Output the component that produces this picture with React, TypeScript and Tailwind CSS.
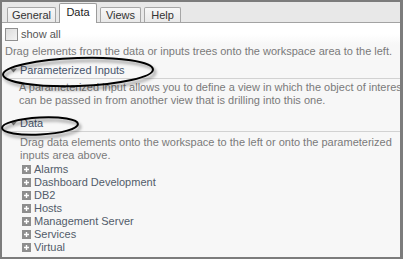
import React from 'react';

const treeItems = ['Alarms', 'Dashboard Development', 'DB2', 'Hosts', 'Management Server', 'Services', 'Virtual'];

function Tab({ label, active, w }: { label: string; active?: boolean; w: string }) {
  if (active) {
    return (
      <div className={`${w} h-[20px] -mb-px bg-white border border-b-0 border-[#9c9c9c] rounded-t-[2px] flex items-center justify-center text-[#222] pb-[2px]`}>
        {label}
      </div>
    );
  }
  return (
    <div className={`${w} h-[15px] bg-gradient-to-b from-[#f7f7f7] to-[#e9e9e9] border border-b-0 border-[#a6a6a6] rounded-t-[2px] flex items-center justify-center text-[#333]`}>
      {label}
    </div>
  );
}

function Caret() {
  return (
    <svg width="7" height="5" viewBox="0 0 7 5" className="shrink-0">
      <path d="M0 0.5 L7 0.5 L3.5 4.5 Z" fill="#7b7b7b" />
    </svg>
  );
}

function PlusBox() {
  return (
    <svg width="9" height="9" viewBox="0 0 9 9" className="shrink-0">
      <rect x="0" y="0" width="9" height="9" fill="#8e8e8e" />
      <path d="M2 4.5 H7 M4.5 2 V7" stroke="#fff" strokeWidth="1.4" />
    </svg>
  );
}

export default function App() {
  return (
    <div className="relative w-[405px] h-[259px] bg-white">
      <div className="w-[403px] h-[259px] flex flex-col border-[#7c7c7c] border-l-2 border-t-2 border-r-[3px] border-b-2 bg-[#f7f7f7] font-['Liberation_Sans',sans-serif] text-[11px] leading-[13px] overflow-hidden">
        {/* tab strip */}
        <div className="h-[21px] shrink-0 bg-[#e8e8e8] border-b border-[#a3a3a3] flex items-end gap-[3px] pl-[5px]">
          <Tab label="General" w="w-[49px]" />
          <Tab label="Data" w="w-[38px]" active />
          <Tab label="Views" w="w-[41px]" />
          <Tab label="Help" w="w-[37px]" />
        </div>

        <div className="h-[22px] shrink-0 flex items-center gap-[3px] pl-[3px] bg-gradient-to-b from-white from-50% to-[#f7f7f7]">
          <div className="w-[13px] h-[13px] border border-[#8f8f8f] bg-gradient-to-br from-[#dcdcdc] to-[#f4f4f4]" />
          <span className="text-[#555]">show all</span>
        </div>

        <div className="pl-[3px] text-[#7a7a7a] whitespace-nowrap">
          Drag elements from the data or inputs trees onto the workspace area to the left.
        </div>

        <div className="mt-[1px] ml-[3px] pt-[5px] pb-[1px] border-b border-[#d2d2d2] flex items-center gap-[3px] pl-[5px]">
          <Caret />
          <span className="text-[#46546c]">Parameterized Inputs</span>
        </div>
        <div className="mt-[2px] pl-[17px] text-[#7a7a7a] whitespace-nowrap">
          <div>A parameterized input allows you to define a view in which the object of interest</div>
          <div>can be passed in from another view that is drilling into this one.</div>
        </div>

        <div className="mt-[4px] ml-[3px] pt-[6px] pb-[1px] border-b border-[#d2d2d2] flex items-center gap-[3px] pl-[5px]">
          <Caret />
          <span className="text-[#46546c]">Data</span>
        </div>
        <div className="mt-[4px] pl-[18px] text-[#7a7a7a] whitespace-nowrap">
          <div>Drag data elements onto the workspace to the left or onto the parameterized</div>
          <div>inputs area above.</div>
        </div>

        <div className="mt-[1px] pl-[20px] flex flex-col">
          {treeItems.map((t) => (
            <div key={t} className="h-[13px] flex items-center gap-[3px] text-[#525c6a]">
              <PlusBox />
              <span>{t}</span>
            </div>
          ))}
        </div>
      </div>

      {/* annotation ellipses drawn over the panel */}
      <svg className="absolute inset-0 pointer-events-none" width="405" height="259" viewBox="0 0 405 259">
        <defs>
          <filter id="sh" x="-20%" y="-50%" width="140%" height="200%">
            <feGaussianBlur stdDeviation="1.6" />
          </filter>
        </defs>
        <g transform="rotate(-2 78 72)">
          <ellipse cx="80" cy="75" rx="75" ry="14" fill="none" stroke="#000" strokeOpacity="0.35" strokeWidth="2.5" filter="url(#sh)" />
          <ellipse cx="78" cy="72" rx="75" ry="14" fill="none" stroke="#000" strokeWidth="2" />
        </g>
        <g transform="rotate(-3 40 126)">
          <ellipse cx="42" cy="129" rx="38" ry="8.5" fill="none" stroke="#000" strokeOpacity="0.35" strokeWidth="2.5" filter="url(#sh)" />
          <ellipse cx="40" cy="126" rx="38" ry="8.5" fill="none" stroke="#000" strokeWidth="2" />
        </g>
      </svg>
    </div>
  );
}
